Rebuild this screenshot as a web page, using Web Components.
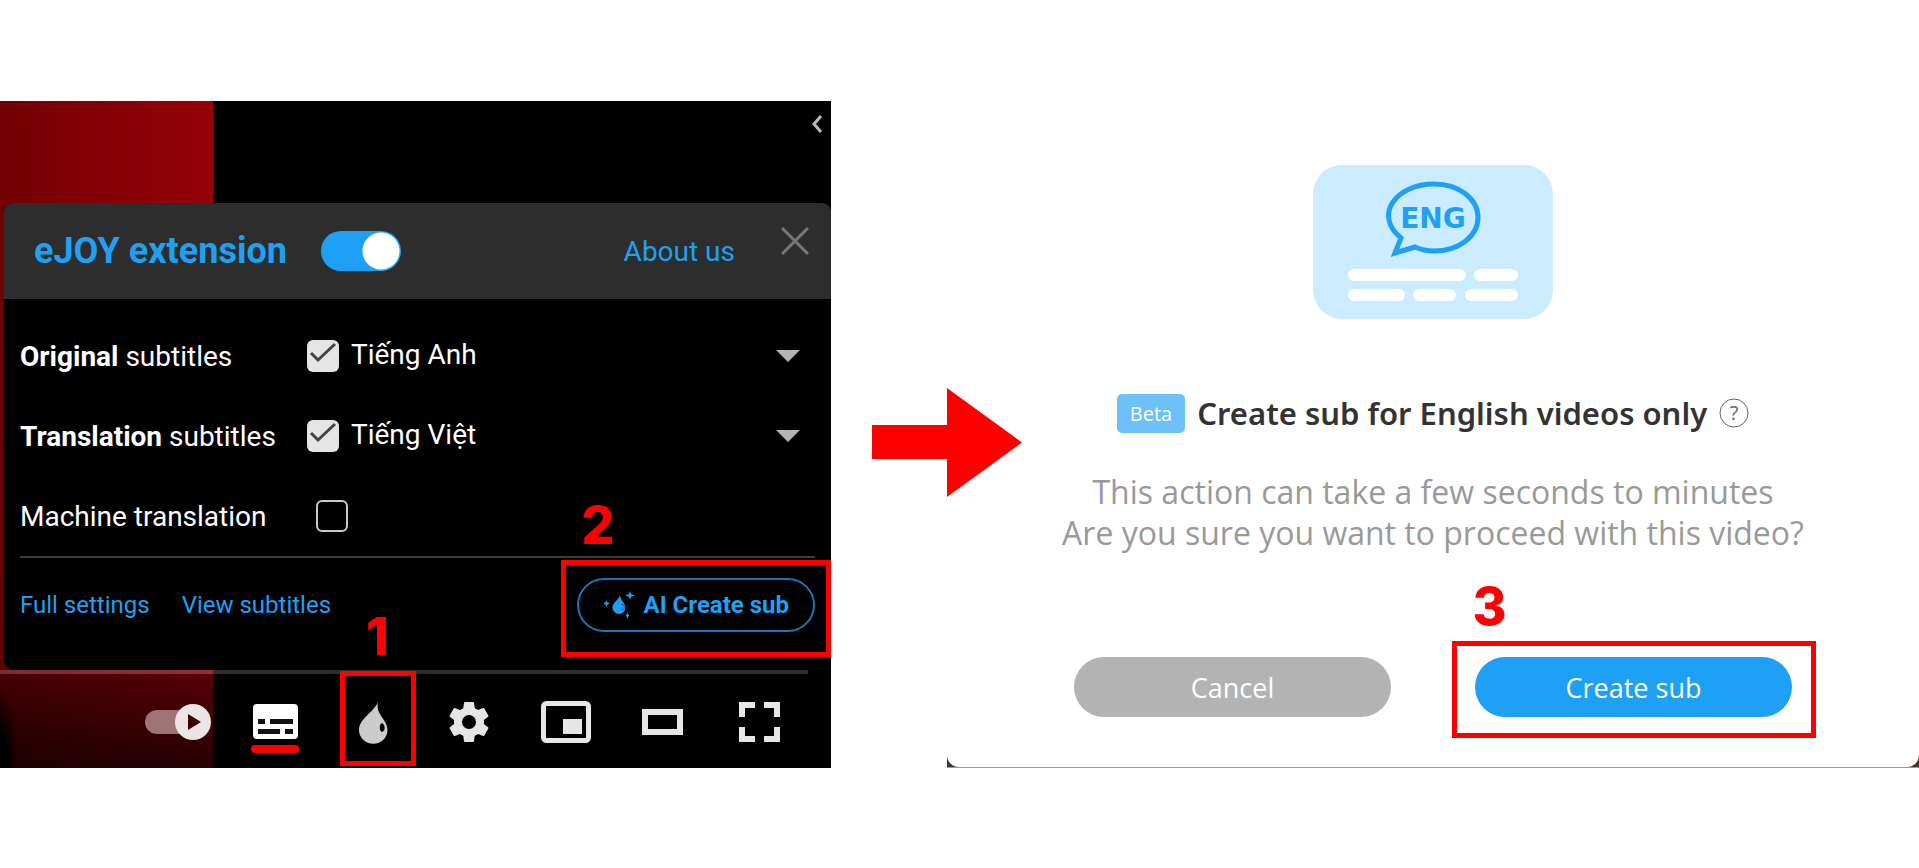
<!DOCTYPE html>
<html lang="en">
<head>
<meta charset="utf-8">
<meta name="viewport" content="width=device-width, initial-scale=1">
<title>Create subtitles with eJOY</title>
<style>
  body{
    margin: 0;
    background: #fff;
    font-family: Roboto, "Liberation Sans", sans-serif;
  }
  guide-page{ --accent: #1ea1f4; --mark: #ff0000; }
</style>
</head>
<body>
<guide-page>
  <video-player slot="before"></video-player>
  <flow-arrow slot="arrow"></flow-arrow>
  <create-dialog slot="after"></create-dialog>
</guide-page>

<script>
/* ============================================================
   Helper: open shadow root filled from a string
   ============================================================ */
class BaseElement extends HTMLElement{
  constructor(){
    super();
    this.attachShadow({mode:"open"}).innerHTML = this.render();
  }
  render(){ return "<slot></slot>"; }
}

/* ============================================================
   Page: player, arrow, dialog side by side
   ============================================================ */
class GuidePage extends BaseElement{
  render(){
    return `
      <style>
        :host{
          box-sizing: border-box;
          display: grid;
          grid-template-columns: minmax(0, 831fr) minmax(0, 116fr) minmax(0, 972fr);
          align-items: center;
          min-height: 100vh;
          padding-top: 1px;
        }
      </style>
      <slot name="before"></slot>
      <slot name="arrow"></slot>
      <slot name="after"></slot>
    `;
  }
}

class FlowArrow extends BaseElement{
  render(){
    return `
      <style>
        :host{ display: block; padding: 16px 0 0 41px; z-index: 1; }
        svg{ display: block; width: 150px; height: 109px; fill: var(--mark); }
      </style>
      <svg viewBox="0 0 150 109" aria-hidden="true"><path d="M0 37H75V0L150 54.5L75 109V71H0Z"/></svg>
    `;
  }
}

/* ============================================================
   Red frame and step number round a slotted control
   ============================================================ */
class StepMark extends BaseElement{
  render(){
    return `
      <style>
        :host{ display: inline-block; position: relative; }
        .box{
          position: absolute;
          inset: var(--mark-inset);
          border: 5px solid var(--mark);
          pointer-events: none;
        }
        .num{
          position: absolute;
          left: 0;
          bottom: 100%;
          width: 65px;
          padding-bottom: 9px;
          color: var(--mark);
          font: 800 52px/60px Inter, sans-serif;
          text-align: center;
        }
      </style>
      <slot></slot>
      <div class="box"><span class="num"><slot name="num"></slot></span></div>
    `;
  }
}

/* ============================================================
   Panel rows
   ============================================================ */
class SubtitleRow extends BaseElement{
  render(){
    const lang = this.getAttribute("language");
    const checked = this.hasAttribute("checked") ? "checked" : "";
    const select = lang ? `
      <span class="drop">
        <select aria-label="Language"><option>${lang}</option></select>
        <svg viewBox="0 0 24 12" aria-hidden="true"><path d="M0 0H24L12 12Z"/></svg>
      </span>` : "";
    return `
      <style>
        :host{ display: flex; align-items: center; height: 80px; color: #fff; font-size: 28px; }
        label{ flex: 0 0 var(--label-width, 287px); white-space: nowrap; }
        input{
          appearance: none;
          flex: none;
          box-sizing: border-box;
          width: 32px;
          height: 32px;
          margin: 0;
          border: 2px solid #c8c8c8;
          border-radius: 6px;
        }
        input:checked{
          border: 0;
          background: #e5e5e5 url('data:image/svg+xml,<svg xmlns="http://www.w3.org/2000/svg" viewBox="0 0 32 32"><path d="M4 13l7 7L28 4" fill="none" stroke="%23444" stroke-width="3"/></svg>');
        }
        .drop{ flex: 1; display: grid; align-items: center; margin: 0 15px 4px 12px; }
        select{
          grid-area: 1 / 1;
          appearance: none;
          width: 100%;
          padding: 0;
          border: 0;
          background: none;
          color: inherit;
          font: inherit;
        }
        svg{ grid-area: 1 / 1; justify-self: end; width: 24px; height: 12px; margin-top: 4px; fill: #b3b3b3; pointer-events: none; }
      </style>
      <label for="on"><slot></slot></label>
      <input id="on" type="checkbox" ${checked}>
      ${select}
    `;
  }
}

class EjoyPanel extends BaseElement{
  render(){
    return `
      <style>
        :host{ display: block; background: #000; border-radius: 9px; }
        header{
          display: flex;
          align-items: center;
          height: 96px;
          padding: 0 22px 0 30px;
          background: #2d2d2d;
          border-radius: 9px 9px 0 0;
        }
        h1{ margin: 0 34px 0 0; color: var(--accent); font-size: 36px; font-weight: 700; white-space: nowrap; }
        a{ color: var(--accent); text-decoration: none; white-space: nowrap; }
        .switch{
          appearance: none;
          flex: none;
          width: 80px;
          height: 40px;
          margin: 0;
          border-radius: 20px;
          background: radial-gradient(circle 19px at 60px 20px, #fff 18px, transparent 19px) var(--accent);
        }
        .about{ margin-left: auto; font-size: 28px; }
        .close{
          display: flex;
          margin: 0 0 20px 46px;
          padding: 0;
          border: 0;
          background: none;
        }
        .close svg{ width: 28px; height: 28px; fill: none; stroke: #777; stroke-width: 3; }
        .body{ padding: 17px 16px 0; }
        .short{ --label-width: 296px; }
        footer{
          display: flex;
          align-items: center;
          padding: 20px 0 38px;
          border-top: 2px solid #3d3d3d;
          font-size: 24px;
        }
        footer > a{ margin-right: 32px; }
        step-mark{ margin-left: auto; --mark-inset: -18px -16px -25px -16px; }
        .create{
          box-sizing: border-box;
          display: flex;
          align-items: center;
          height: 54px;
          padding: 0 24px;
          border: 2px solid #1878b6;
          border-radius: 27px;
          background: none;
          color: var(--accent);
          font: 700 24px Roboto, sans-serif;
          white-space: nowrap;
        }
        .create svg{ width: 32px; height: 28px; margin-right: 9px; fill: var(--accent); }
      </style>
      <header>
        <h1>eJOY extension</h1>
        <input class="switch" type="checkbox" role="switch" aria-label="eJOY extension" checked>
        <a class="about" href="#">About us</a>
        <button class="close" aria-label="Close">
          <svg viewBox="0 0 28 28"><path d="M1 1L27 27M27 1L1 27"/></svg>
        </button>
      </header>
      <div class="body">
        <subtitle-row language="Tiếng Anh" checked><b>Original</b> subtitles</subtitle-row>
        <subtitle-row language="Tiếng Việt" checked><b>Translation</b> subtitles</subtitle-row>
        <subtitle-row class="short">Machine translation</subtitle-row>
        <footer>
          <a href="#">Full settings</a>
          <a href="#">View subtitles</a>
          <step-mark>
            <button class="create">
              <svg viewBox="0 0 32 28" aria-hidden="true">
                <path d="M17 4C16 9 9.500 11 9.500 16.500a6.500 6.500 0 0 0 13 0C22.500 12 17.500 10 17 4Z"/>
                <path d="M27 0l1.200 3.300L32 4.500l-3.800 1.200L27 9l-1.200-3.300L22 4.500l3.800-1.200Z"/>
                <path d="M3.500 9l1 2.500L7 12.500l-2.500 1L3.500 16l-1-2.500L0 12.500l2.500-1Z"/>
                <path d="M24.500 21l.8 2.500 1.200 1-1.200 1-.8 2.500-.8-2.500-1.200-1 1.200-1Z"/>
                <path d="M18 13.500h2.500l1 2.500-1 2.500H18" fill="none" stroke="#0b5a92"/>
              </svg>
              AI Create sub
            </button>
            <span slot="num">2</span>
          </step-mark>
        </footer>
      </div>
    `;
  }
}

/* ============================================================
   Player control bar
   ============================================================ */
class PlayerBar extends BaseElement{
  render(){
    return `
      <style>
        :host{ display: block; }
        .progress{ height: 4px; margin-right: 23px; background: rgba(255,255,255,.18); }
        .row{
          display: flex;
          justify-content: flex-end;
          height: 94px;
          padding-right: 23px;
          background:
            radial-gradient(ellipse 18px 80px at 0 100%, #000 40%, transparent),
            linear-gradient(rgba(0,0,0,.3), rgba(0,0,0,.68));
        }
        button{
          display: flex;
          align-items: center;
          justify-content: center;
          width: 97px;
          height: 96px;
          padding: 0;
          border: 0;
          background: none;
        }
        svg{ display: block; fill: #e6e6e6; overflow: visible; }
        step-mark{ --mark-inset: -3px 4px 2px 17px; }
      </style>
      <div class="progress"></div>
      <div class="row">
        <button aria-label="Autoplay">
          <svg width="66" height="36" viewBox="0 0 66 36">
            <rect y="6" width="60" height="24" rx="12" fill="#9f7477"/>
            <circle cx="48" cy="18" r="18" fill="#ece4e5"/>
            <path d="M43 10L56 18L43 26Z" fill="#3d0003"/>
          </svg>
        </button>
        <button aria-label="Subtitles">
          <svg width="48" height="50" viewBox="0 0 48 50">
            <rect x="2" y="7" width="45" height="35" rx="4" fill="#fff"/>
            <path d="M7 22h7v5H7ZM19 22h23v5H19ZM7 32h22v5H7ZM34 32h8v5h-8Z" fill="#111"/>
            <rect y="48" width="48" height="8" rx="4" fill="#f00"/>
          </svg>
        </button>
        <step-mark>
          <button aria-label="eJOY">
            <svg width="29" height="43" viewBox="-2 0 29 43">
              <path d="M19 0C17 10 0 17 0 29a14 13.500 0 0 0 28.500 0C28.500 18 16 14 19 0Z" fill="#ccc"/>
              <path d="M23 22c3 1 4 8 0 9-3-1-3-8 0-9Z" fill="#000"/>
            </svg>
          </button>
          <span slot="num">1</span>
        </step-mark>
        <button aria-label="Settings">
          <svg width="40" height="40" viewBox="2 2 20 20"><path d="M19.430 12.980c.04-.32.07-.64.07-.98s-.03-.66-.07-.98l2.110-1.650c.19-.15.24-.42.12-.64l-2-3.460c-.12-.22-.39-.3-.61-.22l-2.490 1c-.52-.4-1.080-.73-1.690-.98l-.38-2.650C14.460 2.180 14.250 2 14 2h-4c-.25 0-.46.18-.49.42l-.38 2.650c-.61.25-1.170.59-1.690.98l-2.490-1c-.23-.09-.49 0-.61.22l-2 3.460c-.13.22-.07.49.12.64l2.110 1.650c-.04.32-.07.65-.07.98s.03.66.07.98l-2.110 1.650c-.19.15-.24.42-.12.64l2 3.460c.12.22.39.3.61.22l2.490-1c.52.4 1.080.73 1.690.98l.38 2.650c.03.24.24.42.49.42h4c.25 0 .46-.18.49-.42l.38-2.650c.61-.25 1.170-.59 1.690-.98l2.490 1c.23.09.49 0 .61-.22l2-3.460c.12-.22.07-.49-.12-.64l-2.110-1.650ZM12 15.500a3.500 3.500 0 1 1 0-7 3.500 3.500 0 0 1 0 7Z"/></svg>
        </button>
        <button aria-label="Miniplayer">
          <svg width="50" height="42" viewBox="0 0 50 42">
            <rect x="2.500" y="2.500" width="45" height="37" rx="3" fill="none" stroke="#e6e6e6" stroke-width="5"/>
            <rect x="22" y="18" width="19" height="15"/>
          </svg>
        </button>
        <button aria-label="Theater mode">
          <svg width="41" height="26" viewBox="0 0 41 26"><rect x="3" y="3" width="35" height="20" fill="none" stroke="#e6e6e6" stroke-width="6"/></svg>
        </button>
        <button aria-label="Full screen">
          <svg width="41" height="40" viewBox="0 0 41 40"><path d="M0 0H16V6H6V15H0ZM25 0H41V15H35V6H25ZM0 25H6V34H16V40H0ZM35 25H41V40H25V34H35Z"/></svg>
        </button>
      </div>
    `;
  }
}

class VideoPlayer extends BaseElement{
  render(){
    return `
      <style>
        :host{
          display: block;
          background:
            linear-gradient(transparent 20%, rgba(0,0,0,.2)) left / 213px 100% no-repeat,
            linear-gradient(90deg, #720004, #960007) left / 213px 100% no-repeat,
            #000;
        }
        .top{ display: flex; justify-content: flex-end; height: 102px; }
        .top button{ align-self: flex-start; margin: 14px 8px; padding: 0; border: 0; background: none; }
        .top svg{ display: block; width: 12px; height: 18px; fill: none; stroke: #bbb; stroke-width: 3; }
        ejoy-panel{ margin-left: 4px; }
      </style>
      <div class="top">
        <button aria-label="Expand"><svg viewBox="0 0 12 18"><path d="M10 1L3 9L10 17"/></svg></button>
      </div>
      <ejoy-panel></ejoy-panel>
      <player-bar></player-bar>
    `;
  }
}

/* ============================================================
   Confirm dialog
   ============================================================ */
class CreateDialog extends BaseElement{
  render(){
    return `
      <style>
        :host{
          display: block;
          background: linear-gradient(#fff 50%, #40362e 50%);
          border-bottom: 1px solid #999;
          font-family: "Open Sans", "Noto Sans", sans-serif;
        }
        .card{
          display: flex;
          flex-direction: column;
          align-items: center;
          padding: 64px 16px 50px;
          background: #fff;
          border-radius: 0 0 12px 12px;
        }
        .art{ width: 240px; height: 154px; }
        .art text{ font: 700 28px "DejaVu Sans", sans-serif; }
        .title{ display: flex; align-items: center; margin: 73px 0 0; height: 42px; }
        .beta{
          padding: 0 13px;
          border-radius: 5px;
          background: #6cc1f8;
          color: #fff;
          font-size: 20px;
          line-height: 39px;
        }
        h2{ margin: 0 12px; color: #333; font: 600 31px "Noto Sans", sans-serif; white-space: nowrap; }
        .help{ display: flex; padding: 0; border: 0; background: none; }
        .help svg{ width: 30px; height: 30px; }
        .help text{ font: 20px "Open Sans", sans-serif; }
        p{ margin: 37px 0 0; color: #999; font-size: 32px; line-height: 41px; text-align: center; white-space: nowrap; }
        .actions{ display: flex; gap: 84px; margin-top: 104px; }
        .actions button{
          width: 317px;
          height: 60px;
          border: 0;
          border-radius: 30px;
          background: #b3b3b3;
          color: #fff;
          font: 27px "Open Sans", sans-serif;
        }
        .actions .go{ background: var(--accent); }
        step-mark{ --mark-inset: -16px -24px -21px -23px; }
      </style>
      <div class="card">
        <svg class="art" viewBox="0 0 240 154" role="img" aria-label="English subtitles">
          <rect width="240" height="154" rx="29" fill="#cbebff"/>
          <path d="M88 73C60 50 83 19 121 19c25 0 44 15 44 33.500S146 86 121 86q-10 0-19-4L82 88Z" fill="none" stroke="#1ea1f4" stroke-width="5"/>
          <text x="120" y="63" text-anchor="middle" fill="#1ea1f4">ENG</text>
          <g fill="#fff">
            <rect x="35" y="104" width="118" height="12" rx="6"/>
            <rect x="161" y="104" width="44" height="12" rx="6"/>
            <rect x="35" y="124" width="57" height="12" rx="6"/>
            <rect x="100" y="124" width="43" height="12" rx="6"/>
            <rect x="152" y="124" width="53" height="12" rx="6"/>
          </g>
        </svg>
        <div class="title">
          <span class="beta">Beta</span>
          <h2>Create sub for English videos only</h2>
          <button class="help" aria-label="Help">
            <svg viewBox="0 0 30 30"><circle cx="15" cy="15" r="14" fill="none" stroke="#666" stroke-width="1"/><text x="15" y="22" text-anchor="middle" fill="#666">?</text></svg>
          </button>
        </div>
        <p>This action can take a few seconds to minutes<br>Are you sure you want to proceed with this video?</p>
        <div class="actions">
          <button>Cancel</button>
          <step-mark>
            <button class="go">Create sub</button>
            <span slot="num">3</span>
          </step-mark>
        </div>
      </div>
    `;
  }
}

customElements.define("step-mark", StepMark);
customElements.define("subtitle-row", SubtitleRow);
customElements.define("ejoy-panel", EjoyPanel);
customElements.define("player-bar", PlayerBar);
customElements.define("video-player", VideoPlayer);
customElements.define("flow-arrow", FlowArrow);
customElements.define("create-dialog", CreateDialog);
customElements.define("guide-page", GuidePage);
</script>
</body>
</html>
